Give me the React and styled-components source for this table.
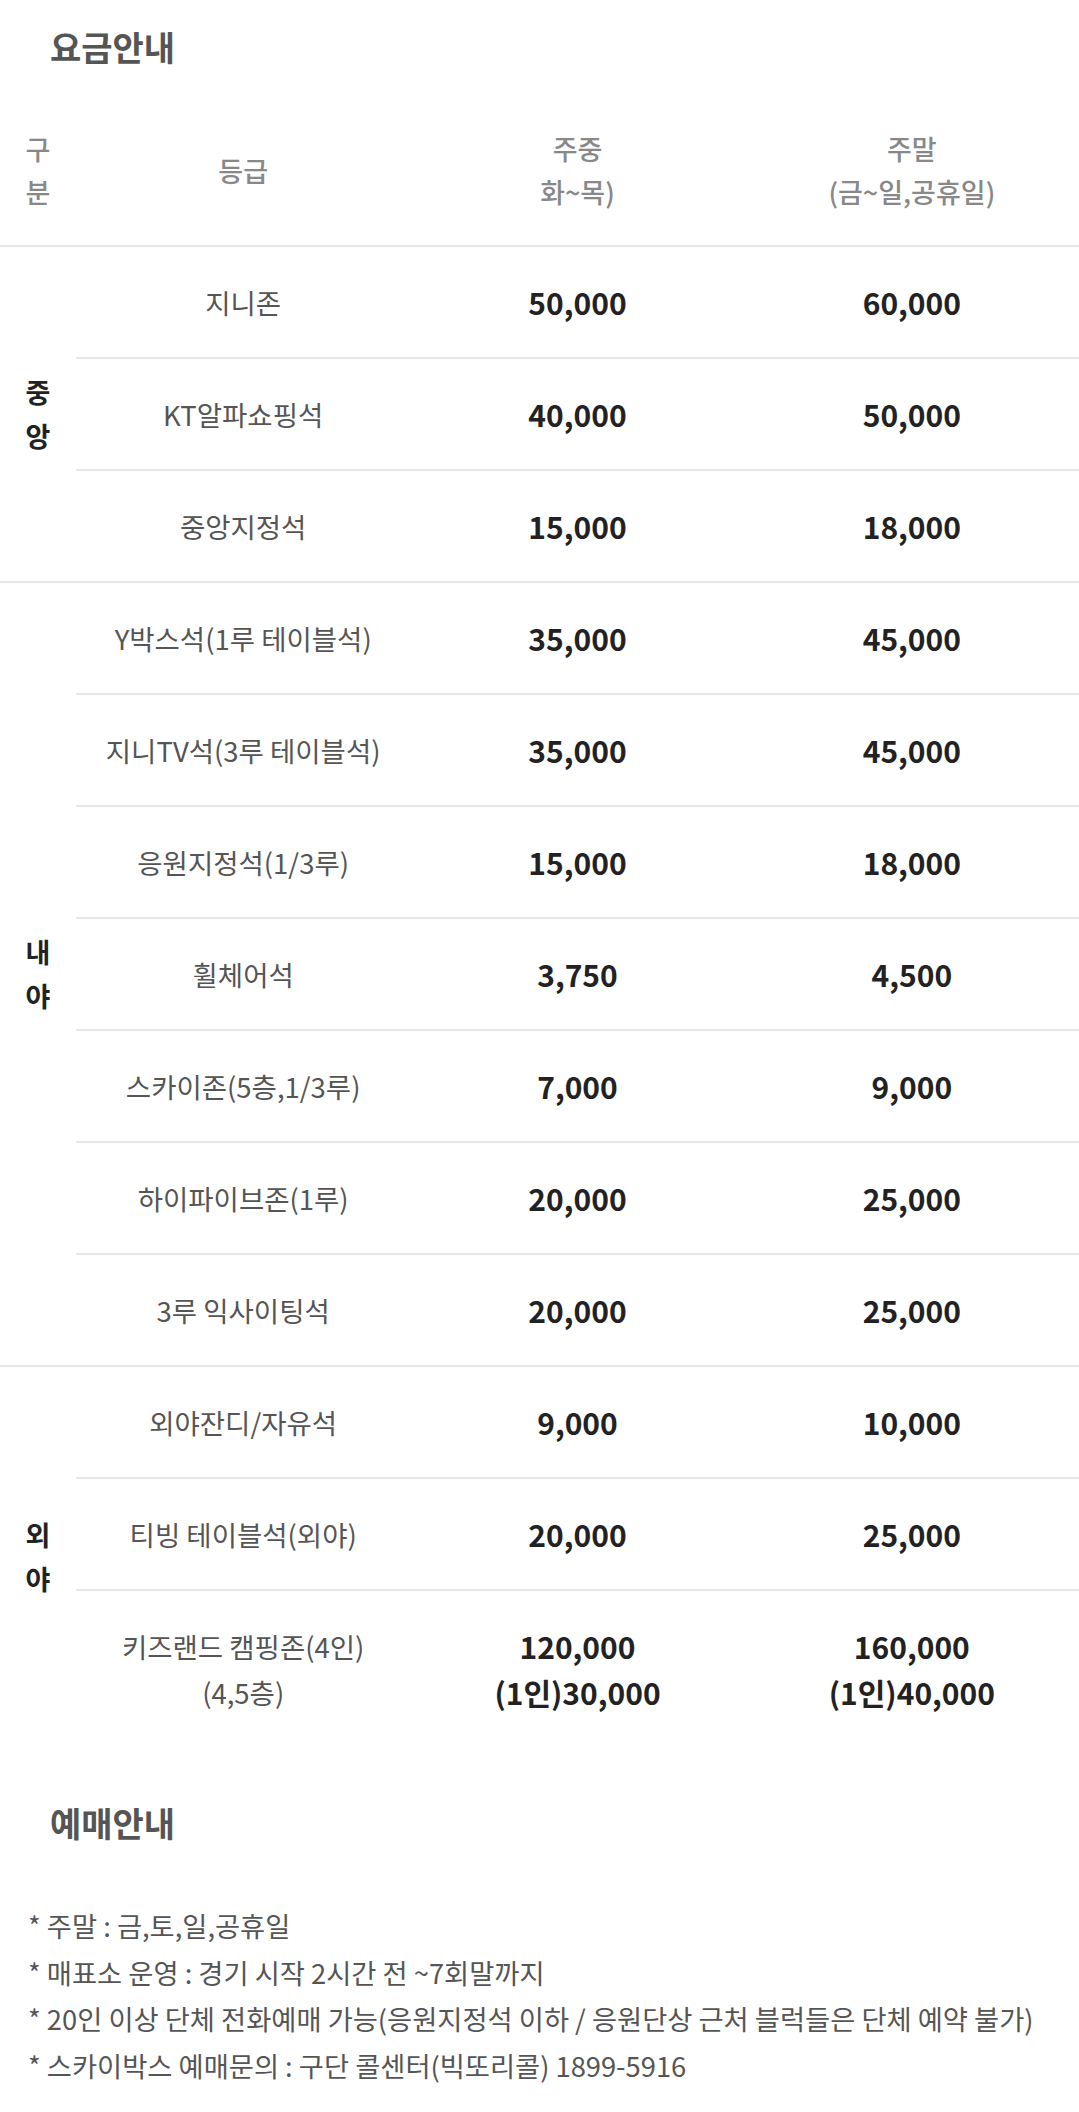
import React from "react";
import styled, { createGlobalStyle } from "styled-components";

const Global = createGlobalStyle`
  html, body { margin: 0; padding: 0; background: #fff; }
  body { font-family: "Noto Sans CJK KR", "Noto Sans", sans-serif; -webkit-font-smoothing: antialiased; }
  * { box-sizing: border-box; }
`;

const Page = styled.div`
  width: 1079px;
  background: #fff;
  padding-bottom: 24px;
`;

const Title = styled.h2`
  margin: 0;
  padding: ${(p) => p.$pad};
  font-size: 34px;
  line-height: 48px;
  font-weight: 700;
  color: #555;
`;

const Table = styled.div`
  display: flex;
  flex-direction: column;
`;

const HeadRow = styled.div`
  display: grid;
  grid-template-columns: 76px 1fr 1fr 1fr;
  padding: 32px 0;
  border-bottom: 2px solid #e6e6e6;
  align-items: center;
`;

const HeadCell = styled.div`
  text-align: center;
  font-size: 27px;
  line-height: 43px;
  font-weight: 500;
  color: #888;
  white-space: pre-line;
`;

const VertText = styled.div`
  width: 1em;
  margin: 0 auto;
  word-break: break-all;
  text-align: center;
`;

const Group = styled.div`
  display: flex;
  border-bottom: ${(p) => (p.$last ? "none" : "2px solid #e6e6e6")};
`;

const Category = styled.div`
  width: 76px;
  flex: none;
  display: flex;
  align-items: center;
  justify-content: center;
  font-size: 27px;
  line-height: 44px;
  font-weight: 700;
  color: #222;
`;

const Rows = styled.div`
  flex: 1;
  display: flex;
  flex-direction: column;
`;

const Row = styled.div`
  display: grid;
  grid-template-columns: 1fr 1fr 1fr;
  padding: 32px 0;
  align-items: center;
  border-bottom: ${(p) => (p.$last ? "none" : "2px solid #e6e6e6")};
`;

const Grade = styled.div`
  text-align: center;
  font-size: 27.5px;
  line-height: 46px;
  color: #555;
  white-space: pre-line;
`;

const Price = styled.div`
  text-align: center;
  font-size: 30px;
  line-height: 46px;
  font-weight: 700;
  color: #222;
  white-space: pre-line;
`;

const Notes = styled.ul`
  list-style: none;
  margin: 0;
  padding: 55px 0 0 28px;
`;

const Note = styled.li`
  font-size: 27.3px;
  line-height: 46.5px;
  color: #555;
`;

const groups = [
  {
    name: "중앙",
    rows: [
      ["지니존", "50,000", "60,000"],
      ["KT알파쇼핑석", "40,000", "50,000"],
      ["중앙지정석", "15,000", "18,000"],
    ],
  },
  {
    name: "내야",
    rows: [
      ["Y박스석(1루 테이블석)", "35,000", "45,000"],
      ["지니TV석(3루 테이블석)", "35,000", "45,000"],
      ["응원지정석(1/3루)", "15,000", "18,000"],
      ["휠체어석", "3,750", "4,500"],
      ["스카이존(5층,1/3루)", "7,000", "9,000"],
      ["하이파이브존(1루)", "20,000", "25,000"],
      ["3루 익사이팅석", "20,000", "25,000"],
    ],
  },
  {
    name: "외야",
    rows: [
      ["외야잔디/자유석", "9,000", "10,000"],
      ["티빙 테이블석(외야)", "20,000", "25,000"],
      ["키즈랜드 캠핑존(4인)\n(4,5층)", "120,000\n(1인)30,000", "160,000\n(1인)40,000"],
    ],
  },
];

const notes = [
  "* 주말 : 금,토,일,공휴일",
  "* 매표소 운영 : 경기 시작 2시간 전 ~7회말까지",
  "* 20인 이상 단체 전화예매 가능(응원지정석 이하 / 응원단상 근처 블럭들은 단체 예약 불가)",
  "* 스카이박스 예매문의 : 구단 콜센터(빅또리콜) 1899-5916",
];

export default function App() {
  return (
    <Page>
      <Global />
      <Title $pad="23px 0 24px 50px">요금안내</Title>
      <Table>
        <HeadRow>
          <HeadCell>
            <VertText>구분</VertText>
          </HeadCell>
          <HeadCell>등급</HeadCell>
          <HeadCell>{"주중\n화~목)"}</HeadCell>
          <HeadCell>{"주말\n(금~일,공휴일)"}</HeadCell>
        </HeadRow>
        {groups.map((g, gi) => (
          <Group key={g.name} $last={gi === groups.length - 1}>
            <Category>
              <VertText>{g.name}</VertText>
            </Category>
            <Rows>
              {g.rows.map((r, ri) => (
                <Row key={r[0]} $last={ri === g.rows.length - 1}>
                  <Grade>{r[0]}</Grade>
                  <Price>{r[1]}</Price>
                  <Price>{r[2]}</Price>
                </Row>
              ))}
            </Rows>
          </Group>
        ))}
      </Table>
      <Title $pad="52px 0 0 50px">예매안내</Title>
      <Notes>
        {notes.map((n) => (
          <Note key={n}>{n}</Note>
        ))}
      </Notes>
    </Page>
  );
}
